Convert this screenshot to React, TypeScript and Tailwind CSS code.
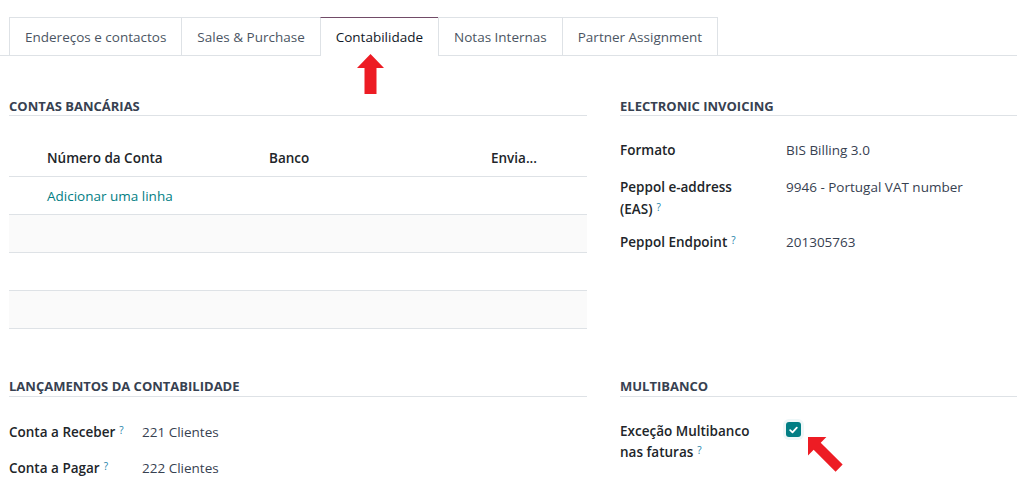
import React from "react";

const Q = () => (
  <sup className="ml-[4px] text-[10px] font-normal text-[#1a82a8] relative top-[-3px]">?</sup>
);

function SectionTitle({ children, pb = "" }: { children: React.ReactNode; pb?: string }) {
  return (
    <div className={"border-b border-[#dee2e6] text-[13px] font-bold uppercase leading-[18px] text-[#374151] " + pb}>
      {children}
    </div>
  );
}

export default function App() {
  const tabs = ["Endereços e contactos", "Sales & Purchase", "Contabilidade", "Notas Internas", "Partner Assignment"];
  return (
    <div
      className="relative h-[501px] w-[1017px] overflow-hidden bg-white text-[13.5px] leading-[22px] text-[#374151]"
      style={{ fontFamily: '"Open Sans", "Noto Sans", sans-serif' }}
    >
      {/* tabs */}
      <div className="mt-[17px] flex border-b border-[#dee2e6] pl-[9px]">
        {tabs.map((t, i) => (
          <div
            key={t}
            className={
              i === 2
                ? "-mb-px -ml-px flex h-[39px] items-center border border-b-0 border-[#dee2e6] border-t-[#714b67] bg-white px-[15px] text-[#111827]"
                : "-mb-px flex h-[39px] items-center border border-[#dee2e6] px-[15px] text-[#4b5563] " +
                  (i > 0 ? "-ml-px" : "")
            }
          >
            {t}
          </div>
        ))}
      </div>

      {/* content */}
      <div className="grid grid-cols-[578px_1fr] gap-x-[33px] pl-[9px]">
        {/* bank accounts */}
        <div className="mt-[41px]">
          <SectionTitle>Contas Bancárias</SectionTitle>
          <div className="mt-[24px]">
            <div className="flex h-[37px] items-center border-b border-[#dee2e6] font-semibold text-[#212529]">
              <div className="w-[260px] pl-[38px]">Número da Conta</div>
              <div className="w-[222px]">Banco</div>
              <div>Envia...</div>
            </div>
            <div className="flex h-[38px] items-center border-b border-[#dee2e6] pl-[38px] text-[#017e84]">
              Adicionar uma linha
            </div>
            <div className="h-[38px] border-b border-[#dee2e6] bg-[#fafafa]" />
            <div className="h-[38px] border-b border-[#dee2e6]" />
            <div className="h-[38px] border-b border-[#dee2e6] bg-[#fafafa]" />
          </div>
        </div>

        {/* electronic invoicing */}
        <div className="mt-[41px]">
          <SectionTitle>Electronic Invoicing</SectionTitle>
          <div className="mt-[23px] flex flex-col">
            <div className="flex">
              <div className="w-[166px] shrink-0 font-semibold text-[#212529]">Formato</div>
              <div>BIS Billing 3.0</div>
            </div>
            <div className="mt-[15px] flex">
              <div className="w-[166px] shrink-0 font-semibold text-[#212529]">
                Peppol e-address
                <br />
                (EAS)
                <Q />
              </div>
              <div>9946 - Portugal VAT number</div>
            </div>
            <div className="mt-[11px] flex">
              <div className="w-[166px] shrink-0 font-semibold text-[#212529]">
                Peppol Endpoint
                <Q />
              </div>
              <div>201305763</div>
            </div>
          </div>
        </div>

        {/* lançamentos */}
        <div className="mt-[48px]">
          <SectionTitle pb="pb-[1px]">Lançamentos da Contabilidade</SectionTitle>
          <div className="mt-[24px] flex flex-col gap-[14px]">
            <div className="flex">
              <div className="w-[133px] shrink-0 font-semibold text-[#212529]">
                Conta a Receber
                <Q />
              </div>
              <div>221 Clientes</div>
            </div>
            <div className="flex">
              <div className="w-[133px] shrink-0 font-semibold text-[#212529]">
                Conta a Pagar
                <Q />
              </div>
              <div>222 Clientes</div>
            </div>
          </div>
        </div>

        {/* multibanco */}
        <div className="mt-[48px]">
          <SectionTitle pb="pb-[1px]">Multibanco</SectionTitle>
          <div className="mt-[24px] flex">
            <div className="w-[166px] shrink-0 font-semibold leading-[21px] text-[#212529]">
              Exceção Multibanco
              <br />
              nas faturas
              <Q />
            </div>
            <div className="pt-[1px]">
              <div className="flex h-[15px] w-[15px] items-center justify-center rounded-[3px] bg-[#017e84] shadow-[0_0_0_3px_#eef7f8]">
                <svg width="9" height="8" viewBox="0 0 9 8">
                  <path d="M1.2 4.2 L3.5 6.3 L7.8 1.6" fill="none" stroke="white" strokeWidth="1.8" strokeLinecap="round" strokeLinejoin="round" />
                </svg>
              </div>
            </div>
          </div>
        </div>
      </div>

      {/* red up arrow */}
      <svg className="absolute left-[357px] top-[54px]" width="27" height="40" viewBox="0 0 27 40">
        <polygon points="13.5,0 27,14 19.5,14 19.5,40 7.5,40 7.5,14 0,14" fill="#ed1c24" />
      </svg>

      {/* red diagonal arrow */}
      <svg className="absolute left-[806px] top-[435px]" width="40" height="40" viewBox="0 0 40 40">
        <g transform="translate(2,2) rotate(-45)">
          <polygon points="0,0 13,13 5,13 5,44 -5,44 -5,13 -13,13" fill="#ed1c24" />
        </g>
      </svg>
    </div>
  );
}
